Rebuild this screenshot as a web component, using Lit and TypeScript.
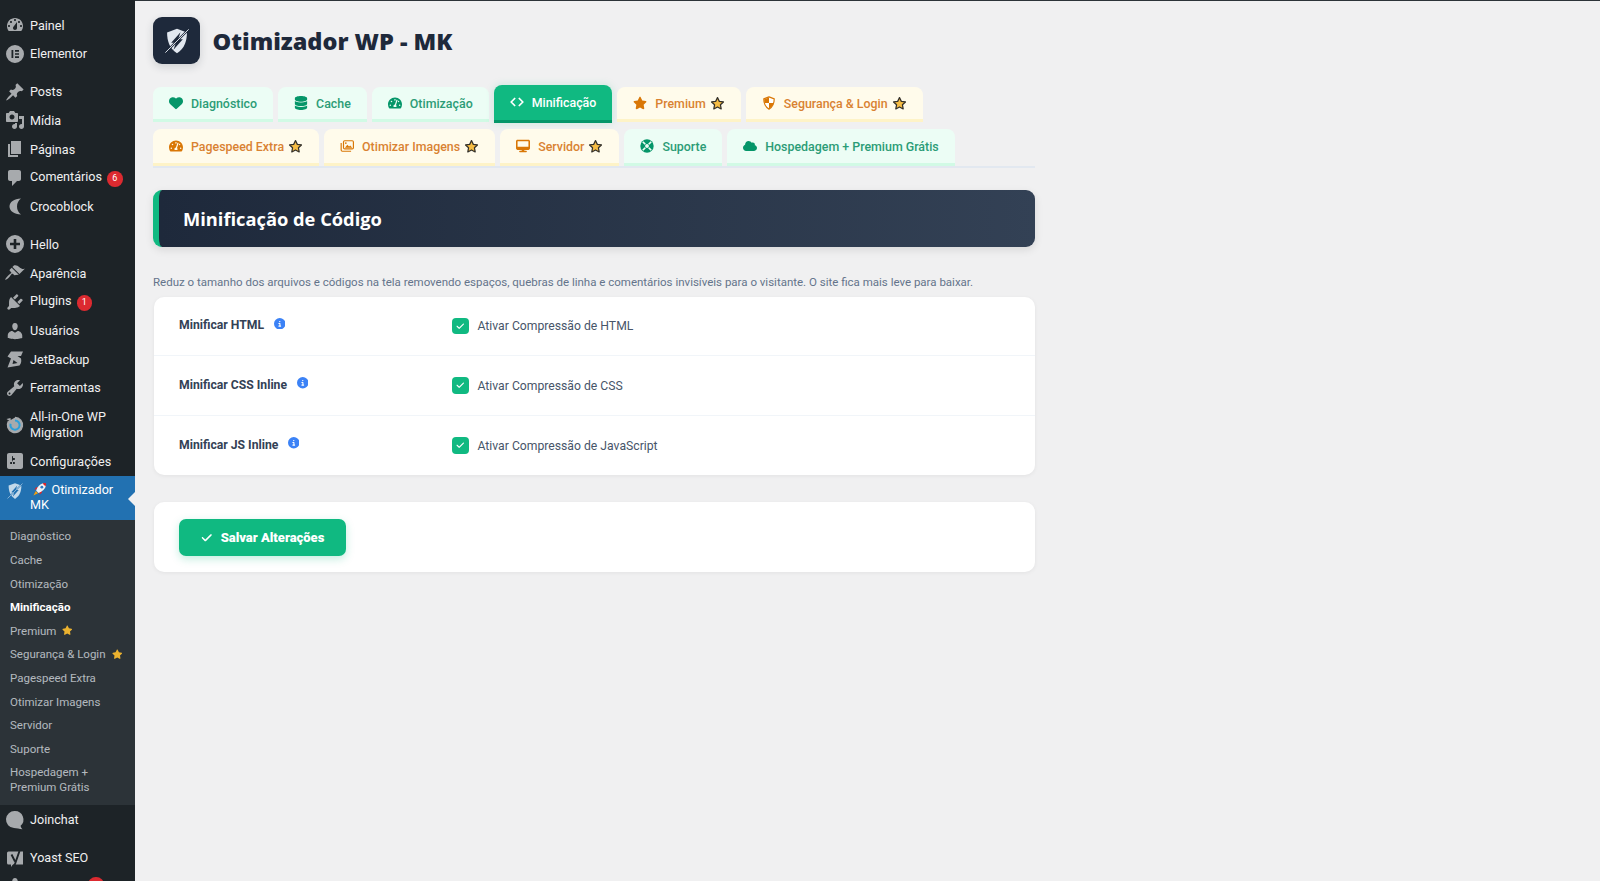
import { LitElement, html, css, svg } from "lit";
import { customElement } from "lit/decorators.js";

const fa = (vb: string, d: string) => html`<svg class="ico" viewBox="${vb}" fill="currentColor"><path d="${d}"></path></svg>`;
const dash = (d: string) => html`<svg class="dash" viewBox="0 0 20 20" fill="currentColor" fill-rule="evenodd"><path d="${d}"></path></svg>`;

const STAR = "M316.9 18C311.6 7 300.4 0 288.1 0s-23.4 7-28.8 18L195 150.3 51.4 171.5c-12 1.8-22 10.2-25.7 21.7s-.7 24.2 7.9 32.7L137.8 329 113.2 474.7c-2 12 3 24.2 12.9 31.3s23 8 33.8 2.3l128.3-68.5 128.3 68.5c10.8 5.7 23.9 4.9 33.8-2.3s14.9-19.3 12.9-31.3L438.5 329 542.7 225.9c8.6-8.5 11.7-21.2 7.9-32.7s-13.7-19.9-25.7-21.7L381.2 150.3 316.9 18z";
const GAUGE = "M288 32C128.94 32 0 160.94 0 320c0 52.8 14.25 102.26 39.06 144.8 5.61 9.62 16.3 15.2 27.44 15.2h443c11.14 0 21.83-5.58 27.44-15.2C561.75 422.26 576 372.8 576 320c0-159.06-128.94-288-288-288zm0 64c14.71 0 26.58 10.13 30.32 23.65-1.11 2.26-2.64 4.23-3.45 6.67l-9.22 27.67c-5.13 3.49-10.97 6.01-17.64 6.01-17.67 0-32-14.33-32-32S270.33 96 288 96zM96 384c-17.67 0-32-14.33-32-32s14.33-32 32-32 32 14.33 32 32-14.33 32-32 32zm48-160c-17.67 0-32-14.33-32-32s14.33-32 32-32 32 14.33 32 32-14.33 32-32 32zm246.77-72.41l-61.33 184C343.13 347.33 352 364.54 352 384c0 11.72-3.38 22.55-8.88 32H232.88c-5.5-9.45-8.88-20.28-8.88-32 0-33.94 26.5-61.43 59.9-63.59l61.34-184.01c4.17-12.56 17.73-19.45 30.36-15.17 12.57 4.19 19.35 17.79 15.17 30.36zm14.66 57.2l15.52-46.55c3.47-1.29 7.13-2.23 11.05-2.23 17.67 0 32 14.33 32 32s-14.33 32-32 32c-11.38-.01-20.89-6.28-26.57-15.22zM480 384c-17.67 0-32-14.33-32-32s14.33-32 32-32 32 14.33 32 32-14.33 32-32 32z";
const INFO = "M256 512A256 256 0 1 0 256 0a256 256 0 1 0 0 512zM216 336h24V272H216c-13.3 0-24-10.7-24-24s10.7-24 24-24h48c13.3 0 24 10.7 24 24v88h8c13.3 0 24 10.7 24 24s-10.7 24-24 24H216c-13.3 0-24-10.7-24-24s10.7-24 24-24zm40-208a32 32 0 1 1 0 64 32 32 0 1 1 0-64z";
const CHECK = "M438.6 105.4c12.5 12.5 12.5 32.8 0 45.3l-256 256c-12.5 12.5-32.8 12.5-45.3 0l-128-128c-12.5-12.5-12.5-32.8 0-45.3s32.8-12.5 45.3 0L160 338.7 393.4 105.4c12.5-12.5 32.8-12.5 45.3 0z";

const tabIcons: Record<string, unknown> = {
  heart: fa("0 0 512 512", "M47.6 300.4L228.3 469.1c7.5 7 17.4 10.9 27.7 10.9s20.2-3.9 27.7-10.9L464.4 300.4c30.4-28.3 47.6-68 47.6-109.5v-5.8c0-69.9-50.5-129.5-119.4-141C347 36.5 300.6 51.4 268 84L256 96 244 84c-32.6-32.6-79-47.5-124.6-39.9C50.5 55.6 0 115.2 0 185.1v5.8c0 41.5 17.2 81.2 47.6 109.5z"),
  db: fa("0 0 448 512", "M448 80v48c0 44.2-100.3 80-224 80S0 172.2 0 128V80C0 35.8 100.3 0 224 0S448 35.8 448 80zM393.2 214.7c20.8-7.4 39.9-16.9 54.8-28.6V288c0 44.2-100.3 80-224 80S0 332.2 0 288V186.1c14.9 11.8 34 21.2 54.8 28.6C99.7 230.7 159.5 240 224 240s124.3-9.3 169.2-25.3zM0 346.1c14.9 11.8 34 21.2 54.8 28.6C99.7 390.7 159.5 400 224 400s124.3-9.3 169.2-25.3c20.8-7.4 39.9-16.9 54.8-28.6V432c0 44.2-100.3 80-224 80S0 476.2 0 432V346.1z"),
  gauge: fa("0 0 576 512", GAUGE),
  code: html`<svg class="ico" viewBox="0 0 24 24" fill="none" stroke="currentColor" stroke-width="3" stroke-linecap="round" stroke-linejoin="round"><polyline points="8 6 2 12 8 18"></polyline><polyline points="16 6 22 12 16 18"></polyline></svg>`,
  star: fa("0 0 576 512", STAR),
  shield: html`<svg class="ico" viewBox="0 0 24 24"><path d="M12 1.500l9 3.400c0 7-2 13.800-9 17.600C5 18.700 3 11.900 3 4.900z" fill="#fff" stroke="currentColor" stroke-width="2" stroke-linejoin="round"></path><path d="M12 2.500v9.500H4.200C3.800 10 3.800 7.500 3.800 5.500zM12 12h7.800c-.8 4-3.200 7.500-7.800 9.700z" fill="currentColor"></path></svg>`,
  images: html`<svg class="ico" viewBox="0 0 24 24" fill="none" stroke="currentColor" stroke-width="2" stroke-linejoin="round"><rect x="6" y="3" width="17" height="14" rx="2"></rect><path d="M2 7v12a2 2 0 0 0 2 2h15"></path><path d="M8.500 15l4-5 3 3 2-2 3.500 4z" fill="currentColor" stroke="none"></path><circle cx="10" cy="7" r="1.500" fill="currentColor" stroke="none"></circle></svg>`,
  desk: fa("0 0 576 512", "M64 0C28.7 0 0 28.7 0 64V352c0 35.3 28.7 64 64 64H240l-10.7 32H160c-17.7 0-32 14.3-32 32s14.3 32 32 32H416c17.7 0 32-14.3 32-32s-14.3-32-32-32H346.7L336 416H512c35.3 0 64-28.7 64-64V64c0-35.3-28.7-64-64-64H64zM512 64V288H64V64H512z"),
  ring: html`<svg class="ico" viewBox="0 0 24 24"><circle cx="12" cy="12" r="11.500" fill="currentColor"></circle><circle cx="12" cy="12" r="3.300" fill="#ecfdf5"></circle><path d="M5.500 3.800l4.500 4-2.200 2.200-4-4.500zM18.500 3.800l-4.500 4 2.200 2.200 4-4.500zM5.500 20.200l4.500-4-2.200-2.200-4 4.500zM18.500 20.200l-4.500-4 2.200-2.200 4 4.500z" fill="#ecfdf5"></path></svg>`,
  cloud: fa("0 0 640 512", "M0 336c0 79.500 64.500 144 144 144H512c70.700 0 128-57.300 128-128c0-61.900-44-113.600-102.400-125.400c4.100-10.700 6.400-22.400 6.400-34.600c0-53-43-96-96-96c-19.700 0-38.100 6-53.300 16.200C367 64.200 315.300 32 256 32C167.600 32 96 103.600 96 192c0 2.700 .1 5.400 .2 8.100C40.200 219.800 0 273.200 0 336z"),
};

type Tab = { label: string; icon: string; gold?: boolean; active?: boolean; star?: boolean };
const tabs: Tab[] = [
  { label: "Diagnóstico", icon: "heart" },
  { label: "Cache", icon: "db" },
  { label: "Otimização", icon: "gauge" },
  { label: "Minificação", icon: "code", active: true },
  { label: "Premium", icon: "star", gold: true, star: true },
  { label: "Segurança & Login", icon: "shield", gold: true, star: true },
  { label: "Pagespeed Extra", icon: "gauge", gold: true, star: true },
  { label: "Otimizar Imagens", icon: "images", gold: true, star: true },
  { label: "Servidor", icon: "desk", gold: true, star: true },
  { label: "Suporte", icon: "ring" },
  { label: "Hospedagem + Premium Grátis", icon: "cloud" },
];

const rows = [
  { label: "Minificar HTML", check: "Ativar Compressão de HTML" },
  { label: "Minificar CSS Inline", check: "Ativar Compressão de CSS" },
  { label: "Minificar JS Inline", check: "Ativar Compressão de JavaScript" },
];

const SHIELD_LOGO = svg`<path d="M12 1.500l8.500 3.200c0 7-1.800 13.600-8.500 17.800C5.300 18.300 3.500 11.700 3.500 4.700z" fill="currentColor"></path>`;
const logo = (cut: string) => html`<svg viewBox="0 0 24 24" class="shield">${SHIELD_LOGO}
  <path d="M15 4.500L7 13.500h4L9 19.500l8-9h-4z" fill="${cut}"></path>
  <path d="M1.500 22.500L22.500 1.500" stroke="${cut}" stroke-width="1.800"></path>
  <path d="M2 22L22 2" stroke="currentColor" stroke-width=".8"></path></svg>`;

const wp = {
  dashboard: "M3.76 16h12.48c1.100-1.370 1.760-3.110 1.760-5 0-4.420-3.580-8-8-8s-8 3.580-8 8c0 1.890.66 3.630 1.760 5zM10 4c.55 0 1 .45 1 1s-.45 1-1 1-1-.45-1-1 .45-1 1-1zM6 6c.55 0 1 .45 1 1s-.45 1-1 1-1-.45-1-1 .45-1 1-1zm8 0c.55 0 1 .45 1 1s-.45 1-1 1-1-.45-1-1 .45-1 1-1zm-5.370 5.550L12 7v6c0 1.100-.9 2-2 2s-2-.9-2-2c0-.57.24-1.080.63-1.450zM4 10c.55 0 1 .45 1 1s-.45 1-1 1-1-.45-1-1 .45-1 1-1zm12 0c.55 0 1 .45 1 1s-.45 1-1 1-1-.45-1-1 .45-1 1-1z",
  elementor: "M10 1a9 9 0 1 0 0 18 9 9 0 0 0 0-18zM6.500 6h1.800v8H6.500zM10 6h4v1.700h-4zM10 9.150h4v1.700h-4zM10 12.300h4V14h-4z",
  post: "M10.440 3.020l1.820-1.820 6.360 6.350-1.830 1.820c-1.050-.68-2.480-.57-3.410.36l-.75.75c-.92.93-1.040 2.350-.35 3.410l-1.830 1.820-2.410-2.410-2.800 2.790c-.42.42-3.380 2.710-3.800 2.290s1.860-3.390 2.280-3.810l2.790-2.790L4.100 9.360l1.830-1.820c1.050.69 2.480.57 3.400-.36l.75-.75c.93-.92 1.050-2.350.36-3.410z",
  media: "M13 11V4c0-.55-.45-1-1-1h-1.670L9 1H5L3.670 3H2c-.55 0-1 .45-1 1v7c0 .55.45 1 1 1h10c.55 0 1-.45 1-1zM7 4.500c1.380 0 2.500 1.120 2.500 2.500S8.380 9.500 7 9.500 4.500 8.380 4.500 7 5.620 4.500 7 4.500zM14 6h5v10.500c0 1.380-1.120 2.500-2.500 2.500S14 17.880 14 16.500s1.120-2.500 2.500-2.500c.17 0 .34.02.5.05V9h-3V6zm-4 8.050V13h2v3.500c0 1.380-1.120 2.500-2.500 2.500S7 17.880 7 16.500 8.120 14 9.500 14c.17 0 .34.02.5.05z",
  page: "M6 15V2h10v13H6zm-1 1h8v2H3V5h2v11z",
  comments: "M5 2h9c1.100 0 2 .9 2 2v7c0 1.100-.9 2-2 2h-2l-5 5v-5H5c-1.100 0-2-.9-2-2V4c0-1.100.9-2 2-2z",
  croco: "M16 2.500C9 3 4.500 6 4.500 10.500S9 18 16 18.500c-2.500-2-4-4.500-4-8s1.500-6 4-8z",
  plus: "M10 1a9 9 0 1 0 0 18 9 9 0 0 0 0-18zM8.700 5h2.600v3.700H15v2.600h-3.700V15H8.700v-3.700H5V8.700h3.700z",
  appearance: "M14.480 11.060L7.410 3.990l1.500-1.500c.5-.56 2.300-.47 3.510.32 1.210.8 1.430 1.280 2.910 2.100 1.180.64 2.450 1.260 4.450.85zm-.71.71L6.700 4.700 4.930 6.470c-.39.39-.39 1.020 0 1.410l1.060 1.060c.39.39.39 1.030 0 1.420-.6.6-1.430 1.110-2.210 1.690-.35.26-.7.53-1.010.84-1.340 1.340-2.990 3.340-2.500 3.830.49.49 2.490-1.160 3.830-2.500.31-.31.58-.66.84-1.010.58-.78 1.090-1.610 1.690-2.210.39-.39 1.030-.39 1.420 0l1.060 1.060c.39.39 1.020.39 1.410 0z",
  plugins: "M13.110 4.360L9.870 7.600 8 5.730l3.240-3.240c.35-.34 1.050-.2 1.560.32.52.51.66 1.210.31 1.550zm-8 1.770l.91-1.120 9.010 9.010-1.190.84c-.71.71-2.630 1.160-3.820 1.160H6.140L4.900 17.260c-.59.59-1.540.59-2.120 0-.59-.58-.59-1.530 0-2.120l1.240-1.240v-3.880c0-1.130.4-3.190 1.090-3.890zm7.260 3.970l3.240-3.240c.34-.35 1.040-.21 1.550.31.52.51.66 1.210.31 1.550l-3.240 3.250z",
  users: "M10 9.250c-2.270 0-2.730-3.440-2.730-3.440C7 4.020 7.820 2 9.970 2c2.160 0 2.980 2.020 2.710 3.810 0 0-.41 3.440-2.680 3.440zm0 2.570L12.720 10c2.390 0 4.520 2.330 4.520 4.530v2.490s-3.650 1.130-7.240 1.130c-3.650 0-7.240-1.130-7.240-1.130v-2.490c0-2.250 1.940-4.480 4.470-4.480z",
  jet: "M6 2.500h12l-2 4.500h-3.500L16 9.500c.5 2 .5 5-1.500 7L2.500 18.500 6 9.500 2.500 7.500zM8.500 11l-1 4 5-1z",
  tools: "M16.680 9.770c-1.340 1.340-3.300 1.670-4.950.99l-5.410 6.520c-.99.99-2.590.99-3.580 0s-.99-2.590 0-3.570l6.520-5.420c-.68-1.650-.35-3.610.99-4.950 1.280-1.280 3.120-1.620 4.720-1.060l-2.890 2.890 2.820 2.820 2.860-2.870c.53 1.580.18 3.390-1.080 4.650zM3.810 16.210c.4.39 1.040.39 1.430 0 .4-.4.4-1.040 0-1.430-.39-.4-1.030-.4-1.430 0-.39.39-.39 1.030 0 1.430z",
  settings: "M18 16V4c0-1.100-.9-2-2-2H4c-1.100 0-2 .9-2 2v12c0 1.100.9 2 2 2h12c1.100 0 2-.9 2-2zM8 11h1c.55 0 1 .45 1 1s-.45 1-1 1H8v1.500c0 .28-.22.5-.5.5s-.5-.22-.5-.5V13H6c-.55 0-1-.45-1-1s.45-1 1-1h1V5.500c0-.28.22-.5.5-.5s.5.22.5.5V7h1c.55 0 1 .45 1 1s-.45 1-1 1h-1v5.500c0 .28-.22.5-.5.5s-.5-.22-.5-.5V9z",
  joinchat: "M10 1a8.500 8.500 0 0 0-1 17c2.500.2 5.500 1 8.500 1.300-1-1-1.700-2-1.900-3.500A8.500 8.500 0 0 0 10 1z",
};

const aio = html`<svg class="dash" viewBox="0 0 20 20" fill="none"><path d="M10 2.500a7.500 7.500 0 1 1-6.500 3.700" stroke="#a7aaad" stroke-width="1.500"></path><path d="M10 5.500a4.600 4.600 0 1 1-4.400 3.300" stroke="#2d9fd8" stroke-width="2"></path><path d="M1.500 4l4-1 .5 4z" fill="#a7aaad"></path></svg>`;
const yoast = html`<svg class="dash" viewBox="0 0 20 20"><path d="M3.500 3.500h14.500v13H8l-2 2.500v-2.500H3.500a1.500 1.500 0 0 1-1.500-1.500V5a1.500 1.500 0 0 1 1.500-1.500z" fill="#a7aaad"></path><path d="M6.500 6.500l3.500 7M14.500 3l-4.500 13-2.500 3" stroke="#1d2327" stroke-width="1.900" fill="none"></path></svg>`;
const rocket = html`<svg class="rocket" viewBox="0 0 16 16"><path d="M4 9.500L1.500 14.500 6.500 12z" fill="#f59e0b"></path><path d="M5 8L2.500 8 4.500 5.500 7 5.500zM8 11v2.500l2.500-2V9z" fill="#d9262c"></path><path d="M15 1c-4-.3-7 1.500-9.500 5.300L4.400 9l2.600 2.600 2.700-1.100C13.500 8 15.300 5 15 1z" fill="#eef2f6"></path><circle cx="10.500" cy="5.500" r="1.500" fill="#2f78c4"></circle><path d="M15 1c-1.400-.1-2.600 0-3.800.5l3.300 3.300c.4-1.200.6-2.400.5-3.800z" fill="#d9262c"></path></svg>`;

type Item = { t?: string; i?: unknown; badge?: string; sep?: boolean; tall?: boolean };
const before: Item[] = [
  { t: "Painel", i: dash(wp.dashboard) },
  { t: "Elementor", i: dash(wp.elementor) },
  { sep: true },
  { t: "Posts", i: dash(wp.post) },
  { t: "Mídia", i: dash(wp.media) },
  { t: "Páginas", i: dash(wp.page) },
  { t: "Comentários", i: dash(wp.comments), badge: "6" },
  { t: "Crocoblock", i: dash(wp.croco) },
  { sep: true },
  { t: "Hello", i: dash(wp.plus) },
  { t: "Aparência", i: dash(wp.appearance) },
  { t: "Plugins", i: dash(wp.plugins), badge: "1" },
  { t: "Usuários", i: dash(wp.users) },
  { t: "JetBackup", i: dash(wp.jet) },
  { t: "Ferramentas", i: dash(wp.tools) },
  { t: "All-in-One WP Migration", i: aio, tall: true },
  { t: "Configurações", i: dash(wp.settings) },
];
const subs = ["Diagnóstico", "Cache", "Otimização", "Minificação", "Premium", "Segurança & Login", "Pagespeed Extra", "Otimizar Imagens", "Servidor", "Suporte", "Hospedagem + Premium Grátis"];
const starred = new Set(["Premium", "Segurança & Login"]);

@customElement("app-root")
export class AppRoot extends LitElement {
  static styles = css`
    :host { display: flex; width: 1600px; height: 881px; overflow: hidden; background: #f0f0f1; font-family: "Roboto", "Open Sans", sans-serif; }
    * { box-sizing: border-box; }
    .side { flex: 0 0 134.500px; height: 881px; overflow: hidden; background: #1d2327; padding-top: 10.700px; font-size: 12.600px; color: #f0f0f1; }
    .item { display: flex; align-items: center; height: 28.700px; position: relative; }
    .item.tall { height: 44.600px; line-height: 15.800px; }
    .sep { height: 9.300px; }
    .dash { flex: 0 0 20px; width: 20px; height: 20px; margin: 0 5px 0 5px; color: #a7aaad; fill: currentColor; }
    .lbl { flex: 1; min-width: 0; }
    .badge { display: inline-block; width: 15.500px; height: 15.500px; border-radius: 50%; background: #dc2a30; color: #fff; font-size: 9px; line-height: 15.500px; text-align: center; margin-left: 5px; vertical-align: 0; }
    .current { display: flex; background: #2271b1; height: 44px; position: relative; color: #fff; padding-top: 6px; line-height: 15.500px; }
    .current .shield { flex: 0 0 20px; width: 18px; height: 18px; margin: 0 5px 0 5px; color: #c3d9ea; }
    .current .rocket { width: 15px; height: 15px; margin: 0 4.500px -3px 2px; }
    .arrow { position: absolute; right: 0; top: 16px; width: 0; height: 0; border: 7.500px solid transparent; border-right-color: #f0f0f1; border-left-width: 0; }
    .sub { background: #2c3338; padding: 5.400px 0 10px; font-size: 11.500px; color: rgba(240,246,252,.7); }
    .sub div { min-height: 23.600px; padding: 4.500px 10px 0 10px; line-height: 15px; }
    .sub .on { color: #fff; font-weight: 700; }
    .sub svg { width: 10.500px; height: 10.500px; margin-left: 6px; color: #ebb22f; vertical-align: -1px; }

    .main { flex: 1; border-top: 1px solid #2c3338; padding: 16.300px 0 0 18.500px; background: #f0f0f1; }
    .wrap { width: 882px; }
    .head { display: flex; align-items: center; gap: 12.500px; margin-bottom: 22.500px; }
    .logo { width: 47px; height: 47px; border-radius: 9px; background: #1e293b; box-shadow: 0 3px 8px rgba(30,41,59,.16); display: flex; align-items: center; justify-content: center; }
    .logo .shield { width: 28px; height: 28px; color: #e2e8f0; }
    h1 { margin: 2px 0 0; font-family: "Open Sans", sans-serif; font-size: 23.500px; font-weight: 800; color: #1e293b; letter-spacing: 0; line-height: 1; }
    .tabs { display: flex; flex-wrap: wrap; gap: 7px 5px; border-bottom: 2.500px solid #e2e8f0; padding-bottom: .5px; }
    .tab { display: flex; align-items: center; height: 35px; padding: 1px 16px 0; background: #ecfdf5; color: #2b9c76; border-bottom: 3px solid #d1fae5; border-radius: 8px 8px 0 0; font-size: 12.400px; font-weight: 500; white-space: nowrap; }
    .tab:nth-child(n+7) { height: 37px; }
    .tab.gold { background: #fffbeb; color: #d98232; border-bottom-color: #fef3c7; }
    .tab .ico { width: 14px; height: 14px; margin-right: 8px; flex: none; }
    .tab.gold .ico { color: #d97706; }
    .tab:not(.gold):not(.active) .ico { color: #059669; }
    .tab .estar { width: 15px; height: 15px; margin-left: 4px; flex: none; }
    .tab.active { height: 38px; margin: -2px 0 -1px 0; padding-top: 0; background: #10b981; color: #fff; border-bottom-color: #059669; box-shadow: 0 0 8px rgba(16,185,129,.18); }
    .tab.active .ico { color: #fff; }

    .hero { margin-top: 22px; height: 57px; border-radius: 9px; border-left: 6px solid #10b981; background: linear-gradient(90deg, #1e293b, #334155); display: flex; align-items: center; padding-left: 24px; box-shadow: 0 3px 8px rgba(0,0,0,.1); }
    .hero h2 { margin: 0; color: #fff; font-family: "Open Sans", sans-serif; font-size: 18.300px; font-weight: 700; }
    .desc { margin: 26.500px 0 7px; color: #64748b; font-size: 11.500px; line-height: 16px; height: 16px; white-space: nowrap; }
    .card { background: #fff; border-radius: 10px; margin-left: 1px; box-shadow: 0 1px 4px rgba(0,0,0,.06); }
    .row { display: grid; grid-template-columns: 273px 1fr; align-items: center; height: 59.500px; padding-left: 25px; border-bottom: 1px solid #f1f5f9; }
    .row:last-child { border-bottom: 0; }
    .rl { display: flex; align-items: center; font-size: 12.200px; font-weight: 700; color: #334155; margin-top: -2px; }
    .rl .ico { width: 11.500px; height: 11.500px; color: #3b82f6; margin: -3px 0 0 9.500px; }
    .rc { display: flex; align-items: center; font-size: 12.200px; color: #475569; }
    .box { width: 16.500px; height: 16.500px; border-radius: 4px; background: #10b981; color: #fff; display: flex; align-items: center; justify-content: center; margin-right: 9px; }
    .box .ico { width: 8.500px; height: 8.500px; }
    .save { margin-top: 27px; height: 70px; padding: 16.500px 25px; }
    .btn { display: inline-flex; align-items: center; justify-content: center; width: 167px; height: 37px; background: #10b981; color: #fff; border-radius: 7px; font-size: 13px; font-weight: 900; box-shadow: 0 3px 8px rgba(16,185,129,.25); }
    .btn .ico { width: 11.500px; height: 11.500px; margin-right: 8.500px; }
  `;

  private starIcon() {
    return html`<svg class="estar" viewBox="0 0 24 24"><path d="M12 2.500l2.900 6.100 6.600.9-4.800 4.600 1.200 6.600L12 17.500l-5.900 3.200 1.200-6.600L2.500 9.500l6.600-.9z" fill="#f6bd45" stroke="#33302a" stroke-width="2" stroke-linejoin="round"></path></svg>`;
  }

  render() {
    return html`
      <aside class="side">
        ${before.map((m) =>
          m.sep ? html`<div class="sep"></div>` : html`<div class="item ${m.tall ? "tall" : ""}">${m.i}<span class="lbl">${m.t}${m.badge ? html`<span class="badge">${m.badge}</span>` : ""}</span></div>`
        )}
        <div class="current">${logo("#2271b1")}<span class="lbl">${rocket}Otimizador MK</span><i class="arrow"></i></div>
        <div class="sub">
          ${subs.map((s) => html`<div class="${s === "Minificação" ? "on" : ""}">${s}${starred.has(s) ? html`<svg viewBox="0 0 576 512" fill="currentColor"><path d="${STAR}"></path></svg>` : ""}</div>`)}
        </div>
        <div class="item">${dash(wp.joinchat)}<span class="lbl">Joinchat</span></div>
        <div class="sep"></div>
        <div class="item">${yoast}<span class="lbl">Yoast SEO</span></div>
        <div class="item">${dash(wp.users)}<span class="lbl"><span class="badge" style="margin-left:58px"></span></span></div>
      </aside>
      <main class="main">
        <div class="wrap">
          <div class="head"><div class="logo">${logo("#1e293b")}</div><h1>Otimizador WP - MK</h1></div>
          <div class="tabs">
            ${tabs.map((t) => html`<div class="tab ${t.gold ? "gold" : ""} ${t.active ? "active" : ""}">${tabIcons[t.icon]}<span>${t.label}</span>${t.star ? this.starIcon() : ""}</div>`)}
          </div>
          <div class="hero"><h2>Minificação de Código</h2></div>
          <p class="desc">Reduz o tamanho dos arquivos e códigos na tela removendo espaços, quebras de linha e comentários invisíveis para o visitante. O site fica mais leve para baixar.</p>
          <div class="card">
            ${rows.map((r) => html`<div class="row"><div class="rl">${r.label}${fa("0 0 512 512", INFO)}</div><div class="rc"><span class="box">${fa("0 0 448 512", CHECK)}</span>${r.check}</div></div>`)}
          </div>
          <div class="card save"><div class="btn">${fa("0 0 448 512", CHECK)}Salvar Alterações</div></div>
        </div>
      </main>
    `;
  }
}
